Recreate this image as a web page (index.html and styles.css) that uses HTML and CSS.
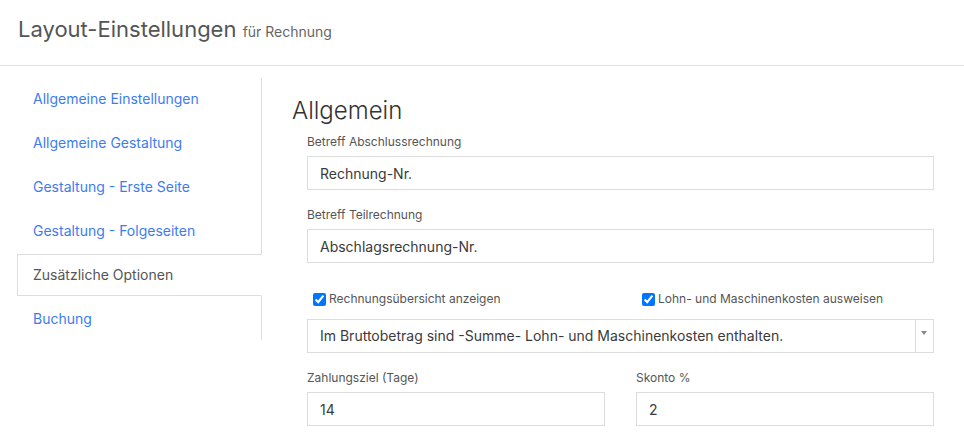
FILE: index.html
```html
<!DOCTYPE html>
<html lang="de">
<head>
    <meta charset="UTF-8">
    <meta name="viewport" content="width=device-width, initial-scale=1.0">
    <title>Layout-Einstellungen</title>
    <link rel="stylesheet" href="styles.css">
</head>
<body>
    <div class="page-header">
        <h1>Layout-Einstellungen <small>für Rechnung</small></h1>
    </div>

    <div class="layout">
        <ul class="side-tabs">
            <li><a href="#">Allgemeine Einstellungen</a></li>
            <li><a href="#">Allgemeine Gestaltung</a></li>
            <li><a href="#">Gestaltung - Erste Seite</a></li>
            <li><a href="#">Gestaltung - Folgeseiten</a></li>
            <li class="active"><a href="#">Zusätzliche Optionen</a></li>
            <li><a href="#">Buchung</a></li>
        </ul>

        <div class="content">
            <h2>Allgemein</h2>
            <div class="form">
                <div class="form-group">
                    <label>Betreff Abschlussrechnung</label>
                    <input class="form-control" type="text" value="Rechnung-Nr.">
                </div>
                <div class="form-group">
                    <label>Betreff Teilrechnung</label>
                    <input class="form-control" type="text" value="Abschlagsrechnung-Nr.">
                </div>

                <div class="row checks">
                    <label class="check"><input type="checkbox" checked> Rechnungsübersicht anzeigen</label>
                    <label class="check"><input type="checkbox" checked> Lohn- und Maschinenkosten ausweisen</label>
                </div>

                <div class="select">
                    <span class="select-value">Im Bruttobetrag sind -Summe- Lohn- und Maschinenkosten enthalten.</span>
                    <span class="select-arrow"></span>
                </div>

                <div class="row">
                    <div class="form-group">
                        <label>Zahlungsziel (Tage)</label>
                        <input class="form-control" type="text" value="14">
                    </div>
                    <div class="form-group">
                        <label>Skonto %</label>
                        <input class="form-control" type="text" value="2">
                    </div>
                </div>
            </div>
        </div>
    </div>
</body>
</html>
```

FILE: styles.css
```css
body {
  margin: 0;
  font-family: Inter, "Noto Sans", sans-serif;
  color: #333;
  background-color: #fff;
}

.page-header {
  height: 66px;
  box-sizing: border-box;
  padding: 14px 18px 0;
  border-bottom: 1px solid #e3e3e3;
}

.page-header h1 {
  margin: 0;
  font-size: 22px;
  font-weight: 400;
  line-height: 30px;
  color: #555;
}

.page-header small {
  font-size: 14px;
  color: #666;
}

.layout {
  display: flex;
}

.side-tabs {
  list-style: none;
  margin: 12px 0 0 17px;
  padding: 0;
  width: 244px;
  align-self: flex-start;
  border-right: 1px solid #ddd;
}

.side-tabs li {
  margin-bottom: 2px;
}

.side-tabs li:last-child {
  margin-bottom: 0;
}

.side-tabs a {
  display: block;
  padding: 10px 15px;
  line-height: 20px;
  font-size: 14px;
  color: #3d7cf0;
  text-decoration: none;
  border: 1px solid transparent;
}

.side-tabs .active a {
  color: #555;
  background-color: #fff;
  border-color: #ddd;
  border-right-color: transparent;
  margin-right: -1px;
}

.content {
  flex: 1;
  padding: 30px 30px 0 30px;
}

.content h2 {
  margin: 0;
  font-size: 24px;
  font-weight: 300;
  line-height: 29px;
  color: #333;
}

.form {
  padding: 8px 0 0 15px;
}

.form-group {
  margin-bottom: 16px;
}

.form-group label {
  display: block;
  font-size: 12px;
  line-height: 18px;
  color: #555;
  margin-bottom: 5px;
}

.form-control {
  display: block;
  width: 100%;
  height: 34px;
  box-sizing: border-box;
  padding: 0 12px;
  border: 1px solid #ddd;
  font-family: inherit;
  font-size: 14px;
  color: #3a3a3a;
  outline: none;
}

.row {
  display: grid;
  grid-template-columns: 1fr 1fr;
  column-gap: 31px;
}

.checks {
  margin-top: 26px;
}

.check {
  display: flex;
  align-items: center;
  padding-left: 6px;
  font-size: 12px;
  line-height: 20px;
  color: #555;
}

.check input {
  width: 13px;
  height: 13px;
  margin: 0 3px 0 0;
}

.select {
  display: flex;
  height: 34px;
  box-sizing: border-box;
  margin: 10px 0 16px;
  border: 1px solid #ddd;
  font-size: 14px;
  color: #3a3a3a;
}

.select-value {
  flex: 1;
  padding: 0 12px;
  line-height: 32px;
}

.select-arrow {
  width: 17px;
  border-left: 1px solid #ddd;
  position: relative;
}

.select-arrow::after {
  content: "";
  position: absolute;
  left: 5px;
  top: 11px;
  border-left: 3px solid transparent;
  border-right: 3px solid transparent;
  border-top: 4px solid #888;
}
```
